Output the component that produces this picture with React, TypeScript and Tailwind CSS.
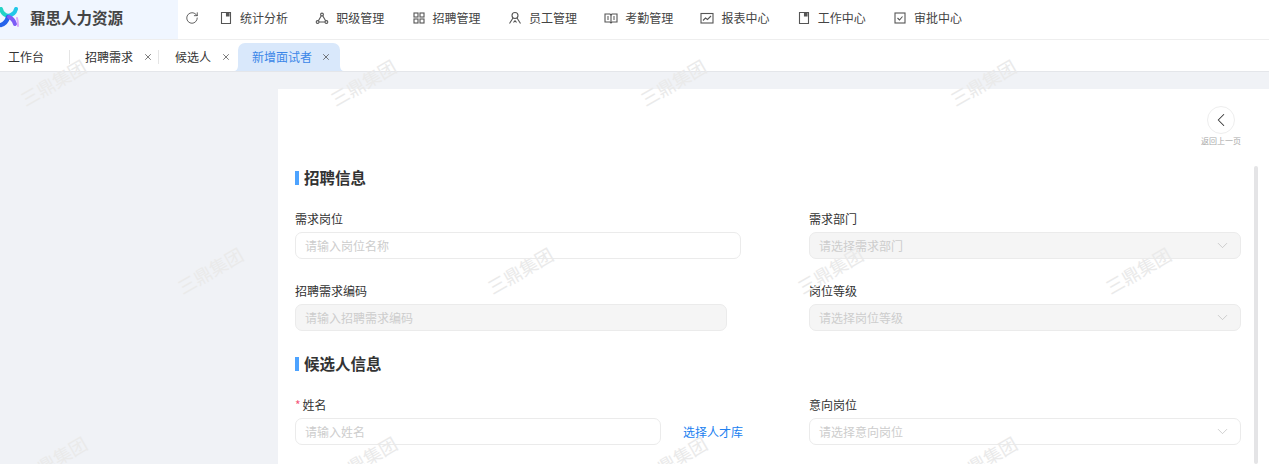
import { ChevronDown, ChevronLeft, RotateCw, X } from "lucide-react"
import type { ReactNode } from "react"

const stroke = { fill: "none", stroke: "#555", strokeWidth: 1.1 }

const DocIcon = () => (
  <svg width="14" height="14" viewBox="0 0 14 14" {...stroke}>
    <path d="M2.5 1.5h9v11h-9z" />
    <path d="M7.5 1.5v3.5h2.5v-3.5" fill="#555" />
  </svg>
)

const navItems: { label: string; icon: ReactNode }[] = [
  { label: "统计分析", icon: <DocIcon /> },
  {
    label: "职级管理",
    icon: (
      <svg width="14" height="14" viewBox="0 0 14 14" {...stroke}>
        <circle cx="7" cy="3.5" r="1.4" />
        <circle cx="2.6" cy="11" r="1.4" />
        <circle cx="11.4" cy="11" r="1.4" />
        <path d="M6.3 4.8 3.4 9.7M7.7 4.8l2.9 4.9M4 11h6" />
      </svg>
    ),
  },
  {
    label: "招聘管理",
    icon: (
      <svg width="14" height="14" viewBox="0 0 14 14" {...stroke}>
        <rect x="2" y="2" width="4" height="4" />
        <rect x="8" y="2" width="4" height="4" />
        <rect x="2" y="8" width="4" height="4" />
        <rect x="8" y="8" width="4" height="4" />
      </svg>
    ),
  },
  {
    label: "员工管理",
    icon: (
      <svg width="14" height="14" viewBox="0 0 14 14" {...stroke}>
        <circle cx="7" cy="4.5" r="3" />
        <path d="M5 7 1.5 12.5M9 7l3.5 5.5M7 9.5l-1.5 2M7 9.5l1.5 2" />
      </svg>
    ),
  },
  {
    label: "考勤管理",
    icon: (
      <svg width="14" height="14" viewBox="0 0 14 14" {...stroke}>
        <path d="M1 3h5l1 1 1-1h5v8H8l-1 1-1-1H1z" />
        <path d="M7 4v7M3 6h2M3 8h2M9 6h2M9 8h2" />
      </svg>
    ),
  },
  {
    label: "报表中心",
    icon: (
      <svg width="14" height="14" viewBox="0 0 14 14" {...stroke}>
        <rect x="1" y="2.5" width="12" height="9.5" />
        <path d="m3 9.5 2.5-2.5 2 1.5L11 5" />
      </svg>
    ),
  },
  { label: "工作中心", icon: <DocIcon /> },
  {
    label: "审批中心",
    icon: (
      <svg width="14" height="14" viewBox="0 0 14 14" {...stroke}>
        <rect x="2" y="2" width="10" height="10" />
        <path d="m4.5 7 2 2 3-3.5" />
      </svg>
    ),
  },
]

const watermarks = [
  [53, 82], [363, 82], [673, 82], [983, 82],
  [210, 270], [520, 270], [830, 270], [1138, 270],
  [54, 459], [364, 459], [674, 459], [984, 459],
]

function Logo() {
  return (
    <svg width="21" height="22" viewBox="0 0 21 22" className="shrink-0 -ml-[1px]">
      <path d="M2 2c1 4 3 6 7 7" fill="none" stroke="#22d3c5" strokeWidth="4" strokeLinecap="round" />
      <path d="M17 2c-1 4-3 6-8 7" fill="none" stroke="#22c7e8" strokeWidth="4" strokeLinecap="round" />
      <path d="M9 10c-1 4-4 7-7 8" fill="none" stroke="#2563eb" strokeWidth="4.4" strokeLinecap="round" />
      <path d="M10 10c3 1 5 4 6 7" fill="none" stroke="#7c5cf6" strokeWidth="4" strokeLinecap="round" />
      <path d="M18 11c1 3 1 5 1 8" fill="none" stroke="#d8a8fa" strokeWidth="2" strokeLinecap="round" />
    </svg>
  )
}

function SectionTitle({ children }: { children: ReactNode }) {
  return (
    <div className="flex items-center h-[22px] text-[15.5px] font-bold text-[#333]">
      <span className="w-[4px] h-[14px] bg-[#4da3ff] mr-[5px]"></span>
      {children}
    </div>
  )
}

function Label({ children, required }: { children: ReactNode; required?: boolean }) {
  return (
    <div className="h-[20px] leading-[20px] text-[12px] text-[#333] mb-[3px]">
      {required && <span className="text-[#f5587b] mr-[2px]">*</span>}
      {children}
    </div>
  )
}

function Field({ placeholder, width, disabled, select }: { placeholder: string; width: string; disabled?: boolean; select?: boolean }) {
  return (
    <div
      className={`flex items-center justify-between shrink-0 h-[27px] pl-[9px] pr-[9px] rounded-[7px] border border-[#ebebeb] text-[12px] text-[#cdcdcd] ${width} ${
        disabled ? "bg-[#f5f5f5]" : "bg-white"
      }`}
    >
      <span>{placeholder}</span>
      {select && <ChevronDown size={17} strokeWidth={0.9} className="text-[#b5b5b5]" />}
    </div>
  )
}

function Tab({ label, closable }: { label: string; closable?: boolean }) {
  return (
    <div className="flex items-center h-full text-[12px] text-[#333]">
      {label}
      {closable && <X size={10} strokeWidth={1.7} className="ml-[10px] text-[#444]" />}
    </div>
  )
}

export default function App() {
  return (
    <div
      className="relative flex flex-col w-[1269px] h-[464px] overflow-hidden bg-[#f0f2f6]"
      style={{ fontFamily: '"Noto Sans CJK SC", "Noto Sans", sans-serif' }}
    >
      {/* Top nav */}
      <div className="flex h-[40px] shrink-0 bg-white border-b border-[#eeeeee]">
        <div className="flex items-center w-[178px] pb-[3px] bg-[#f0f6ff]">
          <Logo />
          <span className="ml-[10px] text-[15.5px] font-bold text-[#444]">鼐思人力资源</span>
        </div>
        <div className="flex items-center pb-[4px] ml-[7px] text-[12px] text-[#444]">
          <RotateCw size={14} strokeWidth={1.3} className="text-[#333] mr-[20px]" />
          <div className="flex items-center gap-[26.3px]">
            {navItems.map((item) => (
              <div key={item.label} className="flex items-center gap-[7px] w-[70px]">
                {item.icon}
                <span className="whitespace-nowrap">{item.label}</span>
              </div>
            ))}
          </div>
        </div>
      </div>

      {/* Tabs */}
      <div className="flex items-end h-[32px] shrink-0 bg-white border-b border-[#e4e6ea]">
        <div className="flex items-center h-[28px] pl-[8px]">
          <Tab label="工作台" />
          <span className="w-px h-[14px] bg-[#e5e5e5] ml-[25px] mr-[15px]"></span>
          <Tab label="招聘需求" closable />
          <span className="w-px h-[14px] bg-[#e5e5e5] ml-[5px] mr-[16px]"></span>
          <Tab label="候选人" closable />
          <div className="relative flex items-center h-[28px] ml-[7px] w-[102px] pl-[14px] rounded-t-[7px] bg-[#d9e8fb] text-[12px] text-[#3b86e8]">
            <svg width="4" height="5" viewBox="0 0 4 5" className="absolute -left-[4px] bottom-0">
              <path d="M4 0v5H0c2 0 4-2 4-5z" fill="#d9e8fb" />
            </svg>
            新增面试者
            <X size={10} strokeWidth={1.7} className="ml-[9px] text-[#444]" />
            <svg width="4" height="5" viewBox="0 0 4 5" className="absolute -right-[4px] bottom-0">
              <path d="M0 0v5h4C2 5 0 3 0 0z" fill="#d9e8fb" />
            </svg>
          </div>
        </div>
      </div>

      {/* Content card */}
      <div className="relative flex-1 ml-[278px] mt-[17px] bg-white pl-[17px] pt-[17px]">
        <div className="absolute right-[28px] top-[17px] flex flex-col items-center">
          <div className="flex items-center justify-center w-[28px] h-[28px] rounded-full border border-[#eeeeee]">
            <ChevronLeft size={22} strokeWidth={1.1} className="text-[#333]" />
          </div>
          <span className="mt-[1px] text-[8px] leading-[12px] text-[#aaaaaa]">返回上一页</span>
        </div>
        <div className="absolute right-[11px] top-[77px] bottom-0 w-[4px] rounded-full bg-[#e4e4e6]"></div>

        <div className="pt-[61px]">
          <SectionTitle>招聘信息</SectionTitle>
          <div className="grid grid-cols-[446px_432px] gap-x-[68px] gap-y-[22px] mt-[20px]">
            <div>
              <Label>需求岗位</Label>
              <Field placeholder="请输入岗位名称" width="w-[446px]" />
            </div>
            <div>
              <Label>需求部门</Label>
              <Field placeholder="请选择需求部门" width="w-[432px]" disabled select />
            </div>
            <div>
              <Label>招聘需求编码</Label>
              <Field placeholder="请输入招聘需求编码" width="w-[432px]" disabled />
            </div>
            <div>
              <Label>岗位等级</Label>
              <Field placeholder="请选择岗位等级" width="w-[432px]" disabled select />
            </div>
          </div>

          <div className="mt-[22px]">
            <SectionTitle>候选人信息</SectionTitle>
          </div>
          <div className="grid grid-cols-[446px_432px] gap-x-[68px] mt-[20px]">
            <div>
              <Label required>姓名</Label>
              <div className="flex items-center">
                <Field placeholder="请输入姓名" width="w-[366px]" />
                <span className="ml-[22px] text-[12px] text-[#2080f0] whitespace-nowrap">选择人才库</span>
              </div>
            </div>
            <div>
              <Label>意向岗位</Label>
              <Field placeholder="请选择意向岗位" width="w-[432px]" select />
            </div>
          </div>
        </div>
      </div>

      {/* Watermark overlay */}
      <div className="absolute inset-0 pointer-events-none">
        {watermarks.map(([x, y]) => (
          <span
            key={`${x}-${y}`}
            className="absolute text-[18px] leading-none whitespace-nowrap text-[#eaeaea] -rotate-30 -translate-x-1/2 -translate-y-1/2"
            style={{ left: x, top: y }}
          >
            三鼎集团
          </span>
        ))}
      </div>
    </div>
  )
}
